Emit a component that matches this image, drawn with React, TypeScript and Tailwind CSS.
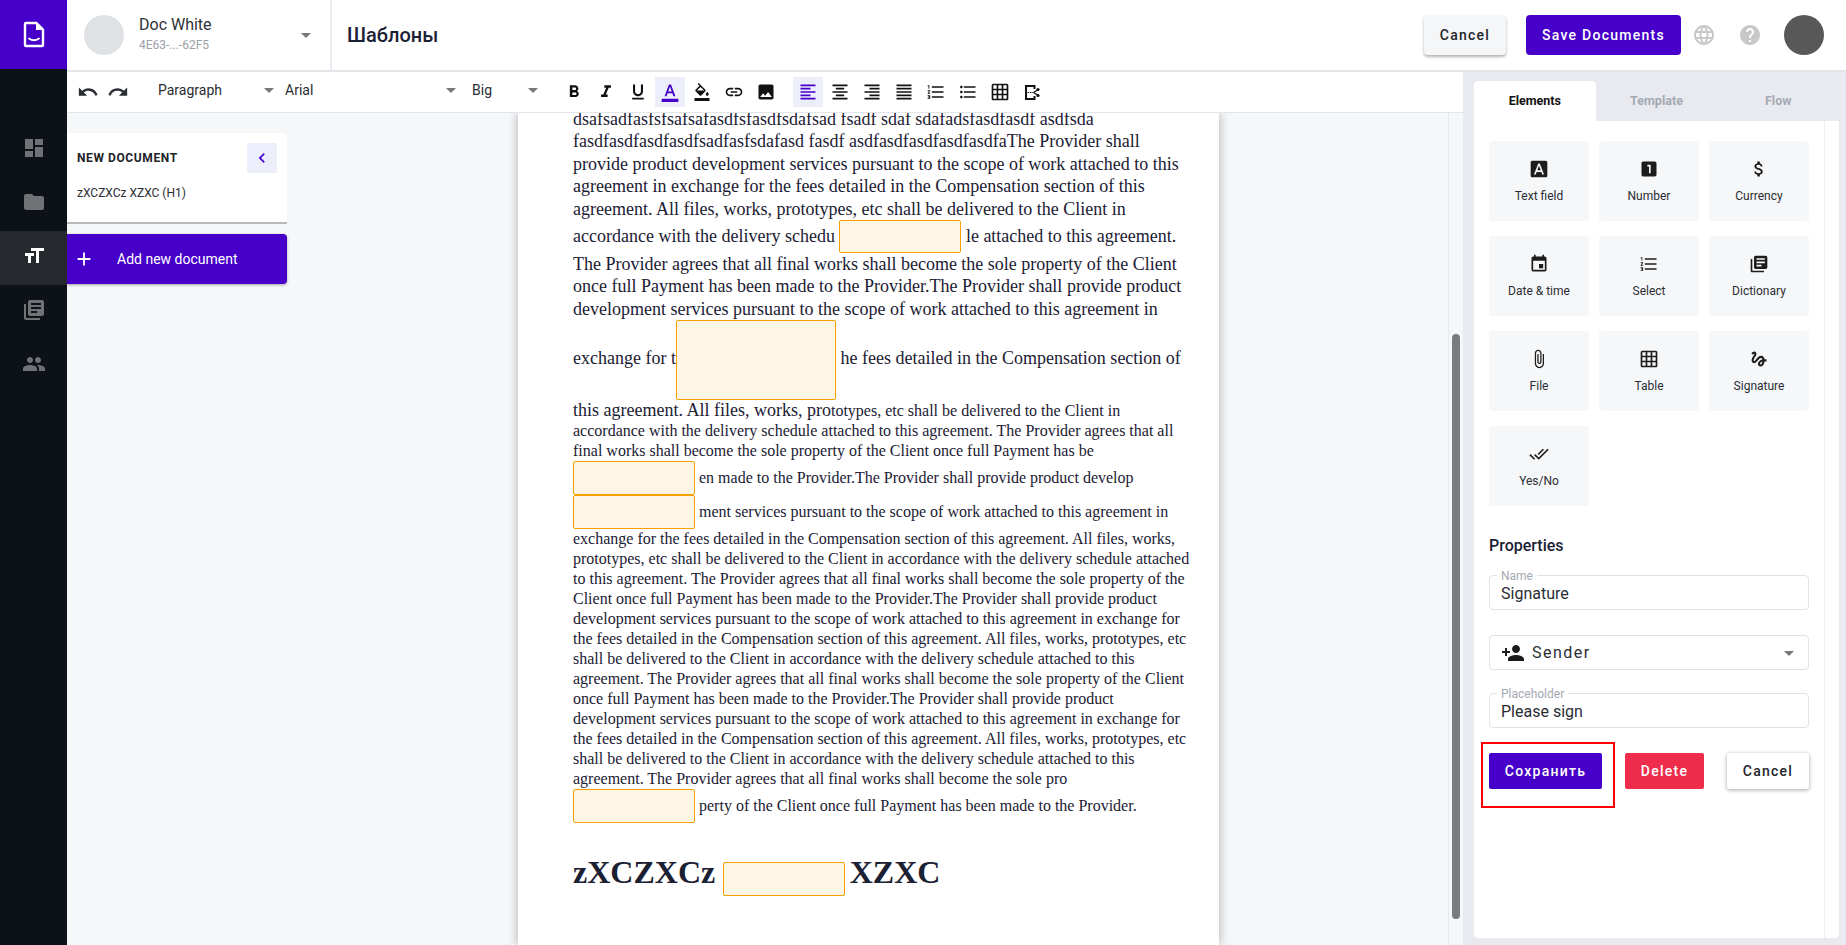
import type { ReactNode } from "react";
import {
  MdAdd,
  MdArrowDropDown,
  MdAttachFile,
  MdAttachMoney,
  MdChevronLeft,
  MdDashboard,
  MdDoneAll,
  MdEvent,
  MdFolder,
  MdFontDownload,
  MdFormatAlignCenter,
  MdFormatAlignJustify,
  MdFormatAlignLeft,
  MdFormatAlignRight,
  MdFormatBold,
  MdFormatItalic,
  MdFormatListBulleted,
  MdFormatListNumbered,
  MdFormatSize,
  MdFormatUnderlined,
  MdGesture,
  MdGridOn,
  MdHelp,
  MdImage,
  MdLanguage,
  MdLibraryBooks,
  MdLink,
  MdLooksOne,
  MdOutlineFormatColorFill,
  MdOutlineFormatColorText,
  MdPeople,
  MdPersonAdd,
  MdRedo,
  MdUndo,
} from "react-icons/md";

const Logo = () => (
  <svg width="22" height="27" viewBox="0 0 22 27">
    <path
      d="M3 2h10.5L20 8.5V24a1 1 0 0 1-1 1H3a1 1 0 0 1-1-1V3a1 1 0 0 1 1-1z"
      fill="none"
      stroke="#fff"
      strokeWidth="2.4"
      strokeLinejoin="round"
    />
    <path d="M13 2.5V9h6.5z" fill="#fff" />
    <path d="M6 17.5c2.8 2 7 2 10 0" fill="none" stroke="#fff" strokeWidth="1.8" strokeLinecap="round" />
  </svg>
);

const PageCut = () => (
  <svg width="15" height="15" viewBox="0 0 15 15">
    <path d="M9.5 4V1H1v13h8.5v-3" fill="none" stroke="#111" strokeWidth="2" />
    <path d="M2.5 7.5h6" stroke="#111" strokeWidth="1.2" strokeDasharray="1.6 0.8" />
    <circle cx="13" cy="4.5" r="1.6" fill="#111" />
    <circle cx="13" cy="10.5" r="1.6" fill="#111" />
    <path d="M8.5 7.5L12.5 5M8.5 7.5l4 2.5" stroke="#111" strokeWidth="1.3" />
  </svg>
);

const ToolBtn = ({ children, active = false }: { children: ReactNode; active?: boolean }) => (
  <div className="flex h-[30px] w-[32px] items-center justify-center">
    <div className={`flex h-[30px] w-[30px] items-center justify-center ${active ? "bg-[#eceefc]" : ""}`}>
      {children}
    </div>
  </div>
);

const Field = ({ className }: { className: string }) => (
  <span className={`inline-block rounded-[2px] border border-[#f7a000] bg-[#fef6e5] ${className}`} />
);

const elements = [
  { label: "Text field", icon: <MdFontDownload size={20} /> },
  { label: "Number", icon: <MdLooksOne size={20} /> },
  { label: "Currency", icon: <MdAttachMoney size={20} /> },
  { label: "Date & time", icon: <MdEvent size={20} /> },
  { label: "Select", icon: <MdFormatListNumbered size={20} /> },
  { label: "Dictionary", icon: <MdLibraryBooks size={20} /> },
  { label: "File", icon: <MdAttachFile size={20} /> },
  { label: "Table", icon: <MdGridOn size={20} /> },
  { label: "Signature", icon: <MdGesture size={20} /> },
  { label: "Yes/No", icon: <MdDoneAll size={20} /> },
];

const TextInput = ({ label, value }: { label: string; value: string }) => (
  <div className="relative h-[35px] rounded-[4px] border border-[#e0e2e6] px-[11px] pt-[8px] text-[16px] leading-[19px] text-[#2a2d33]">
    <span className="absolute -top-[7px] left-[7px] bg-white px-[4px] text-[12px] leading-[14px] text-[#a4a9b3]">
      {label}
    </span>
    {value}
  </div>
);

export default function App() {
  return (
    <div className="flex h-screen w-full overflow-hidden bg-white font-['Roboto',sans-serif] text-[#2a2d33]">
      <aside className="flex w-[67px] shrink-0 flex-col bg-[#0d1219]">
        <div className="flex h-[69px] items-center justify-center bg-[#4600c9]">
          <Logo />
        </div>
        <nav className="mt-[52px] flex flex-col text-[#707276]">
          <div className="flex h-[54px] items-center justify-center">
            <MdDashboard size={24} />
          </div>
          <div className="flex h-[56px] items-center justify-center pb-[2px]">
            <MdFolder size={24} />
          </div>
          <div className="flex h-[54px] items-center justify-center bg-[#25292e] pb-[4px] text-white">
            <MdFormatSize size={24} />
          </div>
          <div className="flex h-[50px] items-center justify-center">
            <MdLibraryBooks size={24} />
          </div>
          <div className="flex h-[58px] items-center justify-center">
            <MdPeople size={24} />
          </div>
        </nav>
      </aside>

      <div className="flex min-w-0 flex-1 flex-col">
        <header className="flex h-[72px] shrink-0 items-center border-b-2 border-[#e2e5e9]">
          <div className="flex h-full w-[265px] items-center border-r-2 border-[#e8eaee] pl-[17px] pr-[12px]">
            <div className="h-[40px] w-[40px] rounded-full bg-[#dfe2e5]" />
            <div className="ml-[15px] flex-1 pb-[4px]">
              <div className="text-[16px] leading-[20px] text-[#2f3237]">Doc White</div>
              <div className="mt-[3px] text-[12px] leading-[14px] text-[#9ba0a8]">4E63-...-62F5</div>
            </div>
            <MdArrowDropDown size={24} className="text-[#777]" />
          </div>
          <h1 className="ml-[15px] text-[20px] font-medium text-[#1b2033]">Шаблоны</h1>
          <div className="ml-auto flex items-center">
            <button className="h-[40px] w-[82px] rounded-[4px] bg-[#f5f6f8] text-[14px] font-medium tracking-[1.25px] text-[#22252a] shadow-[0_2px_3px_rgba(0,0,0,0.3)]">
              Cancel
            </button>
            <button className="ml-[20px] h-[40px] w-[155px] rounded-[4px] bg-[#4600c9] text-[14px] font-medium tracking-[1.25px] text-white">
              Save Documents
            </button>
            <MdLanguage size={24} className="ml-[11px] text-[#c8c8c8]" />
            <MdHelp size={24} className="ml-[22px] text-[#c8c8c8]" />
            <div className="ml-[22px] mr-[22px] h-[40px] w-[40px] rounded-full bg-[#585858]" />
          </div>
        </header>

        <div className="flex min-h-0 flex-1">
          <div className="flex min-w-0 flex-1 flex-col">
            <div className="flex h-[41px] shrink-0 items-center border-b border-[#e2e5e9] text-[14px] text-[#2a2d33]">
              <div className="flex w-[76px] justify-center gap-[8px] pr-[5px]">
                <MdUndo size={22} />
                <MdRedo size={22} />
              </div>
              <div className="ml-[15px] flex w-[127px] items-center justify-between pb-[4px] pr-[4px]">
                Paragraph
                <MdArrowDropDown size={24} className="text-[#777]" />
              </div>
              <div className="flex w-[187px] items-center justify-between pb-[4px] pr-[9px]">
                Arial
                <MdArrowDropDown size={24} className="text-[#777]" />
              </div>
              <div className="flex w-[73px] items-center justify-between pb-[4px]">
                Big
                <MdArrowDropDown size={24} className="text-[#777]" />
              </div>
              <div className="ml-[13px] flex items-center text-[#111]">
                <ToolBtn><MdFormatBold size={20} /></ToolBtn>
                <ToolBtn><MdFormatItalic size={20} /></ToolBtn>
                <ToolBtn><MdFormatUnderlined size={20} /></ToolBtn>
                <ToolBtn active><MdOutlineFormatColorText size={20} className="text-[#4600c9]" /></ToolBtn>
                <ToolBtn><MdOutlineFormatColorFill size={18} /></ToolBtn>
                <ToolBtn><MdLink size={20} /></ToolBtn>
                <ToolBtn><MdImage size={20} /></ToolBtn>
                <div className="w-[10px]" />
                <ToolBtn active><MdFormatAlignLeft size={20} className="text-[#4600c9]" /></ToolBtn>
                <ToolBtn><MdFormatAlignCenter size={20} /></ToolBtn>
                <ToolBtn><MdFormatAlignRight size={20} /></ToolBtn>
                <ToolBtn><MdFormatAlignJustify size={20} /></ToolBtn>
                <ToolBtn><MdFormatListNumbered size={20} /></ToolBtn>
                <ToolBtn><MdFormatListBulleted size={20} /></ToolBtn>
                <ToolBtn><MdGridOn size={20} /></ToolBtn>
                <ToolBtn><PageCut /></ToolBtn>
              </div>
            </div>

            <div className="flex min-h-0 flex-1 overflow-hidden bg-[#f6f7f9]">
              <div className="w-[220px] shrink-0 pt-[20px]">
                <div className="h-[91px] rounded-tr-[4px] border-b-2 border-[#b9b9b9] bg-white pl-[10px] pr-[10px] pt-[10px]">
                  <div className="flex items-center justify-between">
                    <span className="text-[12px] font-bold tracking-[0.6px] text-[#202328]">NEW DOCUMENT</span>
                    <span className="flex h-[30px] w-[30px] items-center justify-center rounded-[2px] bg-[#eceefc] text-[#4600c9]">
                      <MdChevronLeft size={20} />
                    </span>
                  </div>
                  <div className="mt-[13px] text-[12px] leading-[14px] text-[#2a2d33]">zXCZXCz XZXC (H1)</div>
                </div>
                <div className="mt-[10px] flex h-[50px] items-center rounded-r-[4px] bg-[#4600c9] text-[14px] text-white shadow-[0_1px_3px_rgba(0,0,0,0.35)]">
                  <MdAdd size={22} className="ml-[6px]" />
                  <span className="ml-[22px]">Add new document</span>
                </div>
              </div>

              <div className="ml-[231px] w-[701px] shrink-0 overflow-hidden bg-white pl-[55px] shadow-[0_0_10px_rgba(0,0,0,0.3)]">
                <div className="-mt-[5px] w-[619px] font-['Liberation_Serif',serif] text-[#1b2033]">
                  <p className="text-[16px] leading-[20px]">
                    <span className="text-[18px] leading-[22.4px]">
                      dsafsadfasfsfsafsafasdfsfasdfsdafsad fsadf sdaf sdafadsfasdfasdf asdfsda
                      fasdfasdfasdfasdfsadfasfsdafasd fasdf asdfasdfasdfasdfasdfaThe Provider shall provide product
                      development services pursuant to the scope of work attached to this agreement in exchange for the
                      fees detailed in the Compensation section of this agreement. All files, works, prototypes, etc
                      shall be delivered to the Client in accordance with the delivery schedu{" "}
                      <Field className="h-[33px] w-[122px] align-[-11px]" /> le attached to this agreement. The Provider
                      agrees that all final works shall become the sole property of the Client once full Payment has
                      been made to the Provider.The Provider shall provide product development services pursuant to the
                      scope of work attached to this agreement in exchange for t
                      <Field className="h-[80px] w-[160px] align-[-36px]" /> he fees detailed in the Compensation
                      section of{" "}
                    </span>
                    <span className="text-[18px] leading-[20px]">this agreement. All files, works, pro</span>
                    totypes, etc shall be delivered to the Client in accordance with the delivery schedule attached to
                    this agreement. The Provider agrees that all final works shall become the sole property of the
                    Client once full Payment has be <Field className="h-[34px] w-[122px] align-[-12px]" /> en made to the
                    Provider.The Provider shall provide product develop{" "}
                    <Field className="h-[34px] w-[122px] align-[-12px]" /> ment services pursuant to the scope of work
                    attached to this agreement in exchange for the fees detailed in the Compensation section of this
                    agreement. All files, works, prototypes, etc shall be delivered to the Client in accordance with the
                    delivery schedule attached to this agreement. The Provider agrees that all final works shall become
                    the sole property of the Client once full Payment has been made to the Provider.The Provider shall
                    provide product development services pursuant to the scope of work attached to this agreement in
                    exchange for the fees detailed in the Compensation section of this agreement. All files, works,
                    prototypes, etc shall be delivered to the Client in accordance with the delivery schedule attached
                    to this agreement. The Provider agrees that all final works shall become the sole property of the
                    Client once full Payment has been made to the Provider.The Provider shall provide product
                    development services pursuant to the scope of work attached to this agreement in exchange for the
                    fees detailed in the Compensation section of this agreement. All files, works, prototypes, etc shall
                    be delivered to the Client in accordance with the delivery schedule attached to this agreement. The
                    Provider agrees that all final works shall become the sole pro{" "}
                    <Field className="h-[34px] w-[122px] align-[-12px]" /> perty of the Client once full Payment has been
                    made to the Provider.
                  </p>
                  <h2 className="mt-[30px] text-[32px] font-bold leading-[38px]">
                    zXCZXCz <Field className="h-[34px] w-[122px] align-[-13px]" />
                    <span className="text-[18px]"> </span>XZXC
                  </h2>
                </div>
              </div>

              <div className="ml-auto flex w-[15px] shrink-0 justify-center border-l border-[#e8e9ec] pt-[221px]">
                <div className="h-[585px] w-[8px] rounded-[4px] bg-[#7a7b7d]" />
              </div>
            </div>
          </div>

          <aside className="w-[383px] shrink-0 bg-[#e8eaf0] pb-[7px] pl-[11px] pr-[7px] pt-[9px]">
            <div className="flex h-[40px] text-[12.5px] font-bold text-[#a4a9b3]">
              <div className="flex w-[122px] items-center justify-center rounded-t-[4px] bg-white text-[#111]">Elements</div>
              <div className="flex w-[122px] items-center justify-center">Template</div>
              <div className="flex w-[122px] items-center justify-center">Flow</div>
            </div>
            <div className="relative flex h-[817px] rounded-b-[4px] bg-white">
              <div className="w-[351px] border-r border-[#eceef1] px-[15px] pt-[20px]">
                <div className="grid grid-cols-3 gap-x-[10px] gap-y-[15px]">
                  {elements.map((el) => (
                    <div
                      key={el.label}
                      className="flex h-[80px] flex-col items-center rounded-[2px] bg-[#f6f7f9] pt-[18px] text-[12px] text-[#2a2d33]"
                    >
                      <div className="text-[#1c1c1c]">{el.icon}</div>
                      <div className="mt-[10px] leading-[14px]">{el.label}</div>
                    </div>
                  ))}
                </div>
                <h3 className="mt-[30px] text-[16px] font-medium leading-[20px] text-[#1b2033]">Properties</h3>
                <div className="mt-[19px]">
                  <TextInput label="Name" value="Signature" />
                </div>
                <div className="mt-[25px] flex h-[35px] items-center rounded-[4px] border border-[#e0e2e6] pl-[11px] pr-[7px] text-[16px] tracking-[1.5px] text-[#2a2d33]">
                  <MdPersonAdd size={24} className="text-[#1c1c1c]" />
                  <span className="ml-[7px]">Sender</span>
                  <MdArrowDropDown size={24} className="ml-auto text-[#777]" />
                </div>
                <div className="mt-[23px]">
                  <TextInput label="Placeholder" value="Please sign" />
                </div>
                <div className="mt-[25px] flex justify-between">
                  <button className="h-[36px] w-[113px] rounded-[2px] bg-[#4600c9] text-[14px] font-medium tracking-[1.25px] text-white">
                    Сохранить
                  </button>
                  <button className="h-[36px] w-[79px] rounded-[2px] bg-[#ee2c4c] text-[14px] font-medium tracking-[1.25px] text-white">
                    Delete
                  </button>
                  <button className="h-[36px] w-[82px] rounded-[2px] bg-white text-[14px] font-medium tracking-[1.25px] text-[#22252a] shadow-[0_1px_4px_rgba(0,0,0,0.35)]">
                    Cancel
                  </button>
                </div>
              </div>
              <div className="absolute left-[7px] top-[621px] h-[66px] w-[134px] border-2 border-[#f00]" />
            </div>
          </aside>
        </div>
      </div>
    </div>
  );
}
